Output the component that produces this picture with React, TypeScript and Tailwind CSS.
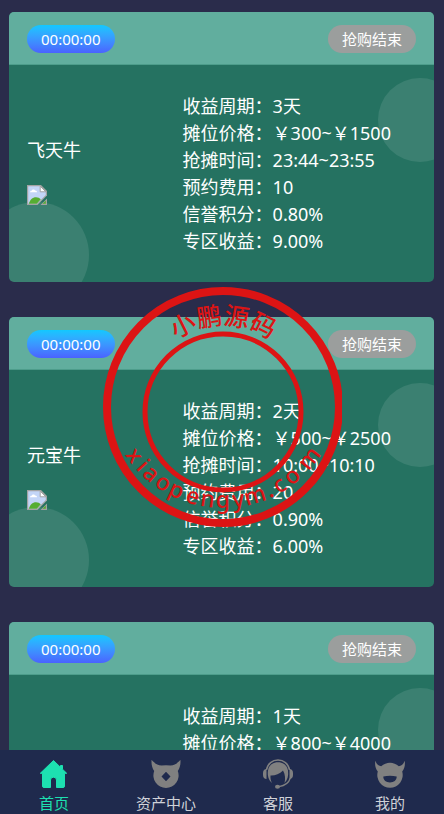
// App.tsx
// 抢购首页：摊位卡片列表、印章水印、底部导航。

import type { ReactNode } from "react";

type Stall = {
  name: string;
  cycle: string;
  price: string;
  time: string;
  fee: string;
  credit: string;
  profit: string;
};

const stalls: Stall[] = [
  { name: "飞天牛", cycle: "3天", price: "￥300~￥1500", time: "23:44~23:55", fee: "10", credit: "0.80%", profit: "9.00%" },
  { name: "元宝牛", cycle: "2天", price: "￥500~￥2500", time: "10:00~10:10", fee: "20", credit: "0.90%", profit: "6.00%" },
  { name: "金币牛", cycle: "1天", price: "￥800~￥4000", time: "14:00~14:10", fee: "30", credit: "1.00%", profit: "3.00%" },
];

function MissingPicture() {
  return (
    <svg viewBox="0 0 20 20" className="h-5 w-5" aria-hidden="true">
      <path d="M0 0h14l6 6v4.500L10.500 20H0z" fill="#a3a3a3" />
      <path d="M1.200 1.200h12L18.800 7v3L10 18.800H1.200z" fill="#c3d5f7" />
      <path d="M3 7.200c0-1 .8-1.600 1.700-1.500C5 4.400 7.600 4.100 8 5.600c1.200-.2 2 .6 2 1.600z" fill="#fff" />
      <path d="M1.800 18.800c1-4 3.700-6.600 7.200-6.600 2 0 3.600.7 4.800 2L9.800 18.800z" fill="#56ad32" />
      <path d="M13.200 1.200v5.600h5.600z" fill="#fff" stroke="#a3a3a3" />
      <path d="M20 13.500V20h-6.500z" fill="#a3a3a3" />
      <path d="M18.800 15.500v3.300h-3.300z" fill="#56ad32" />
    </svg>
  );
}

function StallCard({ stall }: { stall: Stall }) {
  const rows = [
    ["收益周期", stall.cycle],
    ["摊位价格", stall.price],
    ["抢摊时间", stall.time],
    ["预约费用", stall.fee],
    ["信誉积分", stall.credit],
    ["专区收益", stall.profit],
  ];

  return (
    <article className="relative overflow-hidden rounded-[5px] bg-[#257261]">
      <span className="absolute -right-7 top-[66px] h-[84px] w-[84px] rounded-full bg-white/10" />
      <span className="absolute -bottom-[26px] -left-[26px] h-[106px] w-[106px] rounded-full bg-white/10" />
      <header className="flex h-[53px] items-start justify-between border-b border-[#4d9d8b] bg-[#61ae9e] px-[18px] pt-[13px] text-[15px]">
        <time className="h-7 rounded-full bg-linear-to-b from-[#10c8ff] to-[#4a62ff] px-[14px] leading-7">
          00:00:00
        </time>
        <button type="button" className="h-7 rounded-full bg-[#9b9e9d] px-[14px] leading-7">
          抢购结束
        </button>
      </header>
      <div className="relative flex px-[18px] pb-[27px] pt-7 text-[18px] leading-[27px]">
        <div className="flex w-2/5 flex-col gap-[21px] pt-11">
          <h2>{stall.name}</h2>
          <MissingPicture />
        </div>
        <dl className="whitespace-nowrap">
          {rows.map(([label, value]) => (
            <div key={label} className="flex">
              <dt>{label}：</dt>
              <dd>{value}</dd>
            </div>
          ))}
        </dl>
      </div>
    </article>
  );
}

// 印章下方的域名：每个字母在圆弧上的角度（正下方为 0）
const stampLetters: [string, number][] = [
  ["x", 54],
  ["i", 47],
  ["a", 41],
  ["o", 33],
  ["p", 25],
  ["e", 16],
  ["n", 8],
  ["g", 0],
  ["y", -8],
  ["m", -17],
  [".", -25],
  ["c", -31],
  ["o", -39],
  ["m", -52],
];

function Stamp() {
  return (
    <svg
      viewBox="0 0 240 240"
      className="pointer-events-none absolute left-1/2 top-[287px] h-60 w-60 -translate-x-1/2"
      fill="#dc1414"
      aria-hidden="true"
    >
      <g fill="none" stroke="#dc1414">
        <circle cx="121" cy="120" r="116" strokeWidth="8" />
        <circle cx="121" cy="125" r="78" strokeWidth="5" />
      </g>
      <path id="stamp-arc" d="M39 120a82 82 0 0 1 164 0" fill="none" />
      <text fontSize="25" fontWeight="500" textAnchor="middle">
        <textPath href="#stamp-arc" startOffset="50%">
          小鹏源码
        </textPath>
      </text>
      {stampLetters.map(([letter, angle], i) => (
        <text key={i} x="121" y="221" fontSize="23" fontWeight="500" textAnchor="middle" transform={`rotate(${angle} 121 104)`}>
          {letter}
        </text>
      ))}
    </svg>
  );
}

function TabIcon({ children }: { children: ReactNode }) {
  return (
    <svg viewBox="0 0 30 30" className="h-[30px] w-[30px]" fill="currentColor" aria-hidden="true">
      {children}
    </svg>
  );
}

const tabs = [
  {
    label: "首页",
    active: true,
    icon: (
      <path
        d="M14.500 1.500 1.300 14.300h2.200V27q0 1.500 1.500 1.500h6.500v-7.500q0-2.800 3-2.800t3 2.800v7.500H24q1.500 0 1.500-1.500V14.300h2.200L23.500 10.200V6.500h-2v1.800z"
        stroke="currentColor"
        strokeWidth="1"
        strokeLinejoin="round"
      />
    ),
  },
  {
    label: "资产中心",
    active: false,
    icon: (
      <path
        fillRule="evenodd"
        d="M.6.8C3 4 6.500 6.300 10.500 6.600q4.500-.8 9 0C23.500 6.300 27 4 29.400.8c.4 4.200-.4 7.800-2.600 11.200A12.600 12.600 0 1 1 3.200 12C1 8.600.2 5 .6.800zM15 12.700l-4.500 4.800 4.500 4.800 4.500-4.800z"
      />
    ),
  },
  {
    label: "客服",
    active: false,
    icon: (
      <>
        <path d="M3.500 11C4.500 4.500 9.500 1 15 1s10.500 3.500 11.500 10" fill="none" stroke="currentColor" strokeWidth="1.500" />
        <path d="M3.500 10v10C1.500 20 0 18.500 0 16v-2c0-2.500 1.500-4 3.500-4zM26.500 10v10c2 0 3.500-1.500 3.500-4v-2c0-2.500-1.500-4-3.500-4z" />
        <path d="M5 11.500C6 6 10 3.300 15 3.300S24 6 25 11.500c.7 5-.4 9.500-3.500 12.500 1-4 .8-8.500-1.500-12.500-3.500 3.700-8 5.200-12.500 5-.3 3 .3 5 1.500 7.500C5.500 21 4.300 16.500 5 11.500z" />
        <path d="M27.300 19c-1.300 4.500-5 7.600-11.300 8.600" fill="none" stroke="currentColor" strokeWidth="1.300" />
        <ellipse cx="14.500" cy="27.700" rx="2.500" ry="2" />
      </>
    ),
  },
  {
    label: "我的",
    active: false,
    icon: (
      <path
        fillRule="evenodd"
        d="M.3 1.800C1.500 5 3.500 7 6.200 7.300c5-4.900 12.600-4.900 17.600 0 2.700-.3 4.700-2.300 5.900-5.500.6 4.200-.1 7.700-2.500 10.700A12.700 12.700 0 1 1 2.800 12.500C.4 9.500-.3 6 .3 1.800zM8.300 17.500c0 4 2.800 5.900 6.700 5.900s6.700-1.900 6.700-5.900q-6.700-1.600-13.400 0z"
      />
    ),
  },
];

export default function App() {
  return (
    <div className="relative flex h-screen flex-col overflow-hidden bg-[#2a2c4b] font-['Noto_Sans','Noto_Sans_CJK_SC',sans-serif] text-white">
      <main className="flex flex-1 flex-col gap-[35px] overflow-y-auto pb-9 pl-[9px] pr-[10px] pt-3 [scrollbar-width:none] [&>*]:shrink-0">
        {stalls.map((stall) => (
          <StallCard key={stall.name} stall={stall} />
        ))}
      </main>
      <nav className="bg-[#1f2a4d]">
        <div className="-mx-0.5 grid h-16 grid-cols-4">
          {tabs.map((tab) => (
            <a
              key={tab.label}
              href="#"
              className={`flex flex-col items-center pt-[9px] text-[15px] leading-7 ${tab.active ? "text-[#1de0b1]" : "text-[#808080]"}`}
            >
              <TabIcon>{tab.icon}</TabIcon>
              <span className={tab.active ? "" : "text-[#d0d2d8]"}>{tab.label}</span>
            </a>
          ))}
        </div>
      </nav>
      <Stamp />
    </div>
  );
}
